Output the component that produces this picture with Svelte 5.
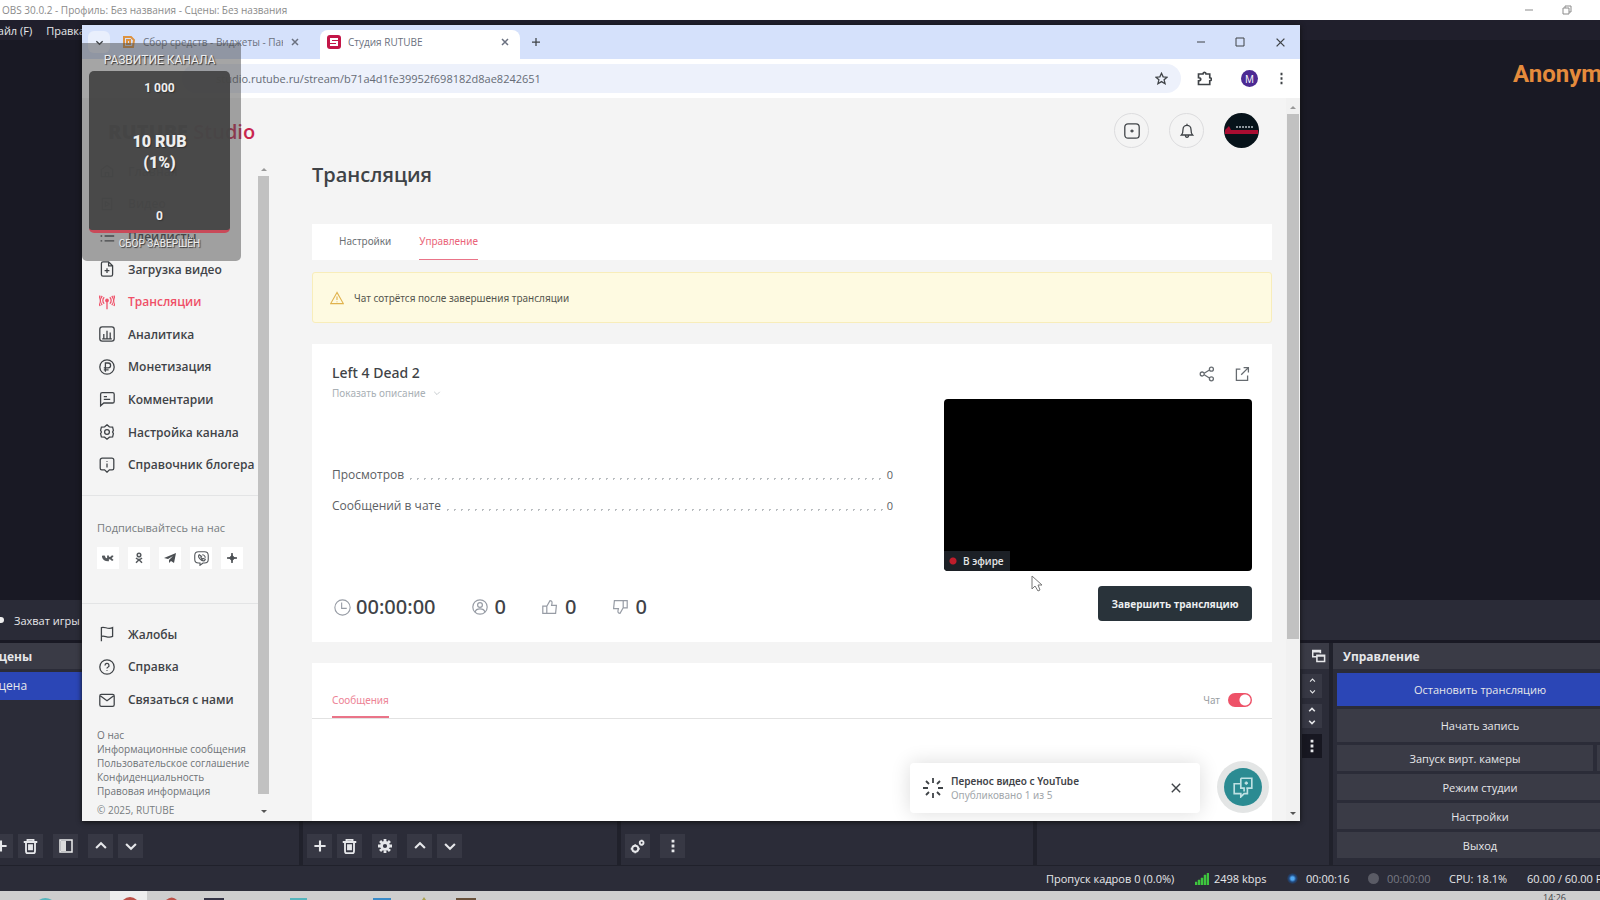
<script lang="ts">
	type Icon = { d: string; dot?: [number, number] };

	const icons: Record<string, Icon> = {
		home: { d: 'M3 8l7-5 7 5v9H3zM8 17v-5h4v5' },
		video: { d: 'M4 3h12v14H4zM8 7l5 3-5 3z' },
		list: { d: 'M2 4h2M2 10h2M2 16h2M7 4h12M7 10h12M7 16h12' },
		upload: { d: 'M12 1H5a2 2 0 0 0-2 2v14a2 2 0 0 0 2 2h10a2 2 0 0 0 2-2V6zM12 1v5h5M10 9v6M7 12h6' },
		live: { d: 'M10 9v10M6.500 4a5.500 5.500 0 0 0 0 8M13.500 4a5.500 5.500 0 0 1 0 8M4 2.500a9 9 0 0 0 0 11.500M16 2.500a9 9 0 0 1 0 11.500M1.500 2a12 12 0 0 0 0 13M18.500 2a12 12 0 0 1 0 13', dot: [10, 8] },
		chart: { d: 'M4 1h12a3 3 0 0 1 3 3v12a3 3 0 0 1-3 3H4a3 3 0 0 1-3-3V4a3 3 0 0 1 3-3zM6 10v6M10 6v10M14 8v8M4 16h12' },
		ruble: { d: 'M19 10a9 9 0 1 1-18 0 9 9 0 0 1 18 0M8 16V5h3.500a3 3 0 0 1 0 6H6M6 13.500h6' },
		comment: { d: 'M2 18.500V4a2 2 0 0 1 2-2h13a2 2 0 0 1 2 2v9a2 2 0 0 1-2 2H6zM6 7h4M6 10.500h8' },
		gear: { d: 'M10 1l3 2.500 4 .5 1 4-1 2 1 2-1 4-4 .5-3 2.500-3-2.500-4-.5-1-4 1-2-1-2 1-4 4-.5zM13 10a3 3 0 1 1-6 0 3 3 0 0 1 6 0' },
		guide: { d: 'M4 1.500h12a2.500 2.500 0 0 1 2.500 2.500v10a2 2 0 0 1-2 2H13l-3 3-3-3H3.500a2 2 0 0 1-2-2V4A2.500 2.500 0 0 1 4 1.500zM10 8v5M10 5v1' },
		flag: { d: 'M3 19V2c4-2 8 3 14 0v11c-6 3-10-2-14 0' },
		help: { d: 'M19 10a9 9 0 1 1-18 0 9 9 0 0 1 18 0M7.500 8a2.500 2.500 0 1 1 3.500 2.300c-1 .4-1 1-1 1.700M10 14v1' },
		mail: { d: 'M3 3h14a2 2 0 0 1 2 2v11a2 2 0 0 1-2 2H3a2 2 0 0 1-2-2V5a2 2 0 0 1 2-2zM2 5l8 6 8-6' },
		share: { d: 'M6.500 10a2.500 2.500 0 1 1-5 0 2.500 2.500 0 0 1 5 0M18 4a2.500 2.500 0 1 1-5 0 2.500 2.500 0 0 1 5 0M18 16a2.500 2.500 0 1 1-5 0 2.500 2.500 0 0 1 5 0M6.500 9l6.500-4M6.500 11l6.500 4' },
		external: { d: 'M8 4H3v14h14v-6M12 2h6v6M18 2L9 11' },
		clock: { d: 'M19 10a9 9 0 1 1-18 0 9 9 0 0 1 18 0M9 4v7h6' },
		person: { d: 'M19 10a9 9 0 1 1-18 0 9 9 0 0 1 18 0M13 7.500a3 3 0 1 1-6 0 3 3 0 0 1 6 0M4 16c1-5 11-5 12 0' },
		like: { d: 'M1 9h5v9H1zM6 9l4-7c3 0 3 2 2 6h6l-1 10H6' },
		dislike: { d: 'M19 11h-5V2h5zM14 11l-4 7c-3 0-3-2-2-6H2L3 2h11' },
		addBox: { d: 'M5 1h10a4 4 0 0 1 4 4v10a4 4 0 0 1-4 4H5a4 4 0 0 1-4-4V5a4 4 0 0 1 4-4zM10 8v4M8 10h4' },
		bell: { d: 'M3 15c2-2 2-4 2-7a5 5 0 0 1 10 0c0 3 0 5 2 7zM8 15c0 4 4 4 4 0M10 1v2' },
		star: { d: 'M10 2l2.500 5.500 6 .5-4.500 4 1.500 6-5.500-3.200L4.500 18 6 12 1.500 8l6-.5z' },
		puzzle: { d: 'M2 4h6c0-3 4-3 4 0h5v5c3 0 3 4 0 4v5H2v-5c4 0 4-4 0-4z' },
		warning: { d: 'M10 2L1 18h18zM10 8v5M10 15v1' },
		plus: { d: 'M10 2v16M2 10h16' },
		up: { d: 'M3 13l7-7 7 7' },
		down: { d: 'M3 7l7 7 7-7' },
		cross: { d: 'M4 4l12 12M16 4L4 16' },
		trash: { d: 'M1 4h18M6 4V1h8v3M4 4v12q0 3 2 3h8q2 0 2-3V4M8 7v8M10 7v8M12 7v8' },
		cog: { d: 'M10 0v4M10 16v4M0 10h4M16 10h4M3 3l3 3M14 14l3 3M3 17l3-3M14 6l3-3M15 10a5 5 0 1 1-10 0 5 5 0 0 1 10 0' },
		cogs: { d: 'M11 13a4 4 0 1 1-8 0 4 4 0 0 1 8 0M18 5a2.500 2.500 0 1 1-5 0 2.500 2.500 0 0 1 5 0M7 7v2M7 17v2M1 13h2M11 13h2M15.500 1v1M15.500 8v1' },
		kebab: { d: 'M10 1v4M10 8v4M10 15v4' },
		popout: { d: 'M12 6V2H1v9h5M1 4h11M7 9h11v9H7zM7 10h11' },
		minimize: { d: 'M2 10h16' },
		maximize: { d: 'M2 2h16v16H2z' },
		restore: { d: 'M2 6h12v12H2zM6 6V2h12v12h-4' },
		spinner: { d: 'M10 0v5M10 15v5M0 10h5M15 10h5M3 3l3 3M14 14l3 3M3 17l3-3M14 6l3-3' },
		chats: { d: 'M8 2h10v9H13M8 2v9h3v3M8 7H2v9h6v3l3-3h3v-5M13 5v3M11.500 6.500h3' },
		vk: { d: 'M1 6c1 6 4 8 9 8V6M3 6c1 4 3 6 6 6M18 6c-2 4-4 4-8 4 4 0 6 1 8 4' },
		ok: { d: 'M13 5a3 3 0 1 1-6 0 3 3 0 0 1 6 0M5 10c3 3 7 3 10 0M10 12v2M10 13l-5 5M10 13l5 5' },
		viber: { d: 'M6 1h8q5 0 5 5v5q0 5-5 5h-2l-4 3v-3H6q-5 0-5-5V6q0-5 5-5zM7 5c-3 3 3 9 7 8l1-2-3-1-1 1-2-3 1-1zM11 5c2 0 4 2 4 4' }
	};

	const nav = [
		['home', 'Главная'],
		['video', 'Видео'],
		['list', 'Плейлисты'],
		['upload', 'Загрузка видео'],
		['live', 'Трансляции'],
		['chart', 'Аналитика'],
		['ruble', 'Монетизация'],
		['comment', 'Комментарии'],
		['gear', 'Настройка канала'],
		['guide', 'Справочник блогера']
	];
	const support = [
		['flag', 'Жалобы'],
		['help', 'Справка'],
		['mail', 'Связаться с нами']
	];
	const legal = [
		'О нас',
		'Информационные сообщения',
		'Пользовательское соглашение',
		'Конфиденциальность',
		'Правовая информация'
	];
	const counters = [
		['Просмотров', '0'],
		['Сообщений в чате', '0']
	];
	const reactions = ['person', 'like', 'dislike'];

	let chatOn = $state(true);
</script>

{#snippet icon(name: string, size: number, weight = 1.6)}
	<svg width={size} height={size} viewBox="0 0 20 20" fill="none" stroke="currentColor" stroke-width={weight} aria-hidden="true">
		<path d={icons[name].d} />
		{#if icons[name].dot}
			<circle cx={icons[name].dot[0]} cy={icons[name].dot[1]} r="1.500" fill="currentColor" />
		{/if}
	</svg>
{/snippet}

<div class="desktop">
	<div class="obs">
		<header class="obs-title">
			<span>OBS 30.0.2 - Профиль: Без названия - Сцены: Без названия</span>
			<div class="obs-window-buttons">
				<button aria-label="Свернуть">{@render icon('minimize', 10, 2)}</button>
				<button aria-label="Развернуть">{@render icon('restore', 10, 2)}</button>
			</div>
		</header>
		<nav class="obs-menu">
			<button>Файл (F)</button>
			<button>Правка</button>
		</nav>
		<div class="canvas"></div>
		<div class="source-bar"><i></i>Захват игры</div>

		<div class="docks">
			<section class="dock scenes">
				<h2>Сцены</h2>
				<div class="scene">Сцена</div>
				<div class="tools">
					<button aria-label="Добавить сцену">{@render icon('plus', 14, 3)}</button>
					<button aria-label="Удалить сцену">{@render icon('trash', 15, 2.5)}</button>
					<button class="gap" aria-label="Фильтры">
						<svg width="14" height="14" viewBox="0 0 14 14"><path d="M1 1h12v12H1z" fill="none" stroke="#eee" stroke-width="1.500" /><path d="M2 2h5v10H2z" fill="#ddd" /></svg>
					</button>
					<button class="gap" aria-label="Вверх">{@render icon('up', 14, 3)}</button>
					<button aria-label="Вниз">{@render icon('down', 14, 3)}</button>
				</div>
			</section>
			<section class="dock sources">
				<div class="tools">
					<button aria-label="Добавить источник">{@render icon('plus', 14, 3)}</button>
					<button aria-label="Удалить источник">{@render icon('trash', 15, 2.5)}</button>
					<button class="gap" aria-label="Свойства">{@render icon('cog', 14, 4)}</button>
					<button class="gap" aria-label="Вверх">{@render icon('up', 14, 3)}</button>
					<button aria-label="Вниз">{@render icon('down', 14, 3)}</button>
				</div>
			</section>
			<section class="dock mixer">
				<div class="tools">
					<button aria-label="Параметры звука">{@render icon('cogs', 15, 2.5)}</button>
					<button class="gap" aria-label="Меню">{@render icon('kebab', 14, 4)}</button>
				</div>
			</section>
			<section class="dock transitions">
				<h2>{@render icon('popout', 14, 2.2)}</h2>
				<div class="steppers">
					<button aria-label="Переход">{@render icon('up', 7, 3)}{@render icon('down', 7, 3)}</button>
					<button aria-label="Длительность">{@render icon('up', 8, 4)}{@render icon('down', 8, 4)}</button>
					<button class="dark" aria-label="Ещё">{@render icon('kebab', 14, 4)}</button>
				</div>
			</section>
			<section class="dock controls">
				<h2>Управление</h2>
				<div class="control-list">
					<button class="tall active">Остановить трансляцию</button>
					<button class="tall">Начать запись</button>
					<div class="split"><button>Запуск вирт. камеры</button><button aria-label="Настройка камеры"></button></div>
					<button>Режим студии</button>
					<button>Настройки</button>
					<button>Выход</button>
				</div>
			</section>
		</div>

		<footer class="status">
			<span class="dropped">Пропуск кадров 0 (0.0%)</span>
			<span class="rate">
				<svg width="14" height="12" viewBox="0 0 14 12" fill="#3fc63f"><path d="M0 9h2v3H0zM3 7h2v5H3zM6 5h2v7H6zM9 2h2v10H9zM12 0h2v12h-2z" stroke="#3fc63f" stroke-width=".5" /></svg>
				2498 kbps
			</span>
			<span class="time"><i class="on"></i>00:00:16</span>
			<span class="time muted"><i></i>00:00:00</span>
			<span class="cpu">CPU: 18.1%</span>
			<span class="fps">60.00 / 60.00 FPS</span>
		</footer>
	</div>

	<div class="taskbar">
		<svg width="500" height="9" aria-hidden="true">
			<path d="M110 0h37v9h-37z" fill="#eee" />
			<path d="M39 9q6-4 13 0zM290 7h17v2h-17z" fill="#55b5bd" />
			<path d="M123 9q7-6 14 0zM166 9q6-5 11 0z" fill="#bd5148" />
			<path d="M204 7h20v2h-20z" fill="#343446" />
			<path d="M373 7h18v2h-18z" fill="#398bc9" />
			<path d="M422 9l2-3 2 3z" fill="#aca24e" />
			<path d="M456 7h20v2h-20z" fill="#68513a" />
		</svg>
		<time>14:26</time>
	</div>

	<div class="donor">Anonymous</div>

	<div class="browser">
		<div class="tabstrip">
			<button class="tab-search" aria-label="Поиск вкладок">{@render icon('down', 9, 3)}</button>
			<div class="tab">
				<svg width="14" height="14" viewBox="0 0 14 14" fill="none" stroke="#dd9240" stroke-width="2"><path d="M2 2h7l3 3-1 7H2zM5 5h3v4H5z" /></svg>
				<span>Сбор средств - Виджеты - Панель</span>
				<button aria-label="Закрыть вкладку">{@render icon('cross', 10, 3)}</button>
			</div>
			<div class="tab current">
				<svg width="14" height="14" viewBox="0 0 14 14"><rect width="14" height="14" rx="3" fill="#c31648" /><path d="M11 4H4v3h6v3H3" fill="none" stroke="#fff" stroke-width="2" /></svg>
				<span>Студия RUTUBE</span>
				<button aria-label="Закрыть вкладку">{@render icon('cross', 10, 3)}</button>
			</div>
			<button class="new-tab" aria-label="Новая вкладка">{@render icon('plus', 10, 2.5)}</button>
			<div class="window-buttons">
				<button aria-label="Свернуть">{@render icon('minimize', 10, 2)}</button>
				<button aria-label="Развернуть">{@render icon('maximize', 10, 2)}</button>
				<button aria-label="Закрыть">{@render icon('cross', 13, 2)}</button>
			</div>
		</div>
		<div class="toolbar">
			<div class="omnibox">
				<input aria-label="Адрес" value="studio.rutube.ru/stream/b71a4d1fe39952f698182d8ae8242651" />
				<button aria-label="В закладки">{@render icon('star', 13, 2)}</button>
			</div>
			<button class="extensions" aria-label="Расширения">{@render icon('puzzle', 15, 2.2)}</button>
			<button class="profile">М</button>
			<button aria-label="Меню">{@render icon('kebab', 13, 3)}</button>
		</div>

		<div class="viewport">
			<div class="page">
				<header class="page-head">
					<a class="logo" href="#studio"><b>RUTUBE</b> Studio</a>
					<button aria-label="Добавить">{@render icon('addBox', 16)}</button>
					<button aria-label="Уведомления">{@render icon('bell', 16)}</button>
					<button class="avatar" aria-label="Профиль">
						<svg width="35" height="35" viewBox="0 0 35 35"><circle cx="17.500" cy="17.500" r="17.500" fill="#07131a" /><path d="M1 17l4-4 2 4h27v4H1z" fill="#a80d31" /><path d="M12 14h18" stroke="#8c969c" stroke-width="2" stroke-dasharray="2 1" /></svg>
					</button>
				</header>
				<div class="page-body">
					<aside>
						<div class="side">
							<nav class="side-nav">
								{#each nav as [name, label]}
									<a href="#{name}" class:active={name === 'live'}>{@render icon(name, 16)}{label}</a>
								{/each}
							</nav>
							<div class="follow">
								<p>Подписывайтесь на нас</p>
								<div class="social">
									<a href="#vk" aria-label="VK">{@render icon('vk', 12, 3)}</a>
									<a href="#ok" aria-label="OK">{@render icon('ok', 12, 2.5)}</a>
									<a href="#telegram" aria-label="Telegram"><svg width="12" height="12" viewBox="0 0 12 12" fill="#4b4f53"><path d="M0 6l12-5-2 10-3-2-2 2V8l4-4-5 3z" /></svg></a>
									<a href="#viber" aria-label="Viber">{@render icon('viber', 15, 1.5)}</a>
									<a href="#zen" aria-label="Дзен"><svg width="10" height="10" viewBox="0 0 10 10" fill="#4b4f53"><path d="M5 0q0 5 5 5-5 0-5 5 0-5-5-5 5 0 5-5z" stroke="#4b4f53" /></svg></a>
								</div>
							</div>
							<nav class="side-nav support">
								{#each support as [name, label]}
									<a href="#{name}">{@render icon(name, 16)}{label}</a>
								{/each}
							</nav>
							<div class="legal">
								{#each legal as label}
									<a href="#legal">{label}</a>
								{/each}
							</div>
							<small>© 2025, RUTUBE</small>
						</div>
						<div class="scroll side-scroll"><i class="arrow-up"></i><i class="thumb"></i><i class="arrow-down"></i></div>
					</aside>

					<main>
						<h1>Трансляция</h1>
						<div class="tabs">
							<a href="#settings">Настройки</a>
							<a href="#manage" class="active">Управление</a>
						</div>
						<div class="alert">{@render icon('warning', 14)}Чат сотрётся после завершения трансляции</div>

						<section class="stream">
							<div class="info">
								<h3>Left 4 Dead 2</h3>
								<button class="more">Показать описание {@render icon('down', 8)}</button>
								<dl>
									{#each counters as [label, value]}
										<div><dt>{label}</dt><i></i><dd>{value}</dd></div>
									{/each}
								</dl>
							</div>
							<div class="player">
								<div class="actions">
									<button aria-label="Поделиться">{@render icon('share', 16)}</button>
									<button aria-label="Открыть">{@render icon('external', 16)}</button>
								</div>
								<div class="video"><span class="on-air">В эфире</span></div>
							</div>
							<div class="stats">
								<span class="duration">{@render icon('clock', 17, 1.3)}00:00:00</span>
								{#each reactions as name}
									<span>{@render icon(name, 16, 1.5)}0</span>
								{/each}
							</div>
							<button class="finish">Завершить трансляцию</button>
						</section>

						<section class="chat">
							<div class="chat-head">
								<a href="#messages">Сообщения</a>
								<label>Чат <input type="checkbox" bind:checked={chatOn} /></label>
							</div>
						</section>
					</main>
				</div>
			</div>
			<div class="scroll page-scroll"><i class="arrow-up"></i><i class="thumb"></i><i class="arrow-down"></i></div>

			<div class="toast">
				{@render icon('spinner', 20, 1.8)}
				<div><b>Перенос видео с YouTube</b><span>Опубликовано 1 из 5</span></div>
				<button aria-label="Закрыть">{@render icon('cross', 14, 2)}</button>
			</div>
			<button class="helper" aria-label="Чат поддержки">{@render icon('chats', 22, 1.5)}</button>
		</div>
	</div>

	<div class="goal">
		<div>РАЗВИТИЕ КАНАЛА</div>
		<div class="goal-box">
			<span>1 000</span>
			<strong>10 RUB<br />(1%)</strong>
			<span>0</span>
		</div>
		<div class="goal-note">СБОР ЗАВЕРШЁН</div>
	</div>

	<svg class="cursor" width="12" height="18" viewBox="0 0 12 18" aria-hidden="true"><path d="M1 1v13l3-3 3 5 2-1-2-5h4z" fill="#fff" stroke="#777" /></svg>
</div>

<style>
	:global(body) {
		margin: 0;
		overflow: hidden;
		background: #191924;
	}

	.desktop {
		position: relative;
		display: flex;
		flex-direction: column;
		height: 100vh;
		overflow: hidden;
		font-family: 'Open Sans', 'Noto Sans', sans-serif;
		font-size: 12px;
		color: #3f4347;
	}

	.desktop * {
		box-sizing: border-box;
	}

	svg {
		display: block;
		flex: none;
	}

	button {
		display: flex;
		align-items: center;
		justify-content: center;
		padding: 0;
		border: 0;
		background: none;
		font: inherit;
		color: inherit;
	}

	a {
		color: inherit;
		text-decoration: none;
	}

	h1,
	h2,
	h3,
	p,
	dl,
	dd {
		margin: 0;
	}

	/* OBS window, slightly wider than the screen on both sides */
	.obs {
		display: flex;
		flex: 1;
		flex-direction: column;
		min-height: 0;
		margin: 0 -24px 0 -11px;
		font-size: 11px;
		color: #e6e7ea;
	}

	.obs-title {
		display: flex;
		align-items: center;
		justify-content: space-between;
		height: 20px;
		padding: 0 52px 0 13px;
		background: #fff;
		font-size: 10px;
		color: #8b8b8b;
	}

	.obs-window-buttons {
		display: flex;
		gap: 28px;
	}

	.obs-menu {
		display: flex;
		gap: 14px;
		height: 20px;
		background: #201f2c;
	}

	.canvas {
		flex: 1;
		background: #191924;
	}

	.source-bar {
		display: flex;
		align-items: center;
		gap: 10px;
		height: 40px;
		padding-left: 9px;
		margin-bottom: 3px;
		background: #2a2b37;
	}

	.source-bar i {
		width: 6px;
		height: 6px;
		border-radius: 3px;
		background: #eee;
	}

	.docks {
		display: flex;
		gap: 4px;
		height: 222px;
		background: #20212b;
	}

	.dock {
		display: flex;
		flex-direction: column;
		background: #2b2c38;
	}

	.dock h2 {
		display: flex;
		align-items: center;
		height: 26px;
		padding: 0 3px 0 10px;
		background: #3a3b46;
		font-size: 12px;
		font-weight: 700;
	}

	.scenes {
		width: 310px;
	}

	.dock.scenes h2 {
		padding-left: 2px;
	}

	.sources {
		width: 314px;
	}

	.mixer {
		flex: 1;
	}

	.transitions {
		width: 292px;
	}

	.dock.transitions h2 {
		justify-content: flex-end;
	}

	.controls {
		width: 291px;
	}

	.scene {
		height: 28px;
		margin-top: 3px;
		padding-left: 2px;
		background: #2b46b6;
		font-size: 12px;
		line-height: 28px;
	}

	.tools {
		display: flex;
		gap: 5px;
		margin-top: auto;
		padding: 0 0 7px 4px;
	}

	.scenes .tools {
		margin-left: -5px;
	}

	.tools button {
		width: 25px;
		height: 24px;
		background: #373844;
	}

	.tools .gap {
		margin-left: 5px;
	}

	.steppers {
		display: flex;
		flex-direction: column;
		align-items: flex-end;
		gap: 6px;
		padding: 5px 7px;
	}

	.steppers button {
		flex-direction: column;
		gap: 4px;
		width: 20px;
		height: 24px;
		background: #373844;
	}

	.steppers .dark {
		background: #171721;
	}

	.control-list {
		display: flex;
		flex-direction: column;
		gap: 3px;
		padding: 4px 1px 0 4px;
	}

	.control-list button {
		height: 26px;
		background: #3a3b46;
	}

	.control-list .tall {
		height: 33px;
	}

	.control-list .active {
		background: #2b46b6;
	}

	.split {
		display: flex;
		gap: 4px;
	}

	.split button:first-child {
		flex: 1;
	}

	.split button:last-child {
		width: 26px;
	}

	.status {
		display: flex;
		align-items: center;
		justify-content: flex-end;
		height: 26px;
		border-top: 1px solid #20212b;
		background: #2b2c38;
		font-size: 11px;
	}

	.status span {
		display: flex;
		align-items: center;
		gap: 5px;
		white-space: nowrap;
	}

	.dropped {
		width: 149px;
	}

	.rate {
		width: 92px;
	}

	.time {
		width: 81px;
	}

	.status .time {
		gap: 8px;
	}

	.time i {
		width: 11px;
		height: 11px;
		border-radius: 50%;
		background: #5a5b65;
	}

	.time .on {
		background: radial-gradient(#52a9f2 20%, #214a80 45%, transparent 75%);
	}

	.muted {
		color: #777983;
	}

	.cpu {
		width: 78px;
	}

	.fps {
		width: 97px;
	}

	.taskbar {
		display: flex;
		justify-content: space-between;
		height: 9px;
		padding-right: 34px;
		overflow: hidden;
		background: #cecece;
		font-size: 9px;
	}

	.donor {
		position: absolute;
		top: 56px;
		left: calc(100% - 87px);
		font-family: Roboto, sans-serif;
		font-size: 24px;
		line-height: 36px;
		font-weight: 700;
		color: #e58b3c;
	}

	/* Browser window */
	.browser {
		position: absolute;
		top: 25px;
		right: 300px;
		bottom: 79px;
		left: 82px;
		display: flex;
		flex-direction: column;
		overflow: hidden;
		background: #fff;
		box-shadow: 0 1px 5px #111;
	}

	.tabstrip {
		display: flex;
		align-items: center;
		height: 34px;
		background: #d5e1fb;
		font-size: 10px;
	}

	.tab-search {
		width: 22px;
		height: 22px;
		margin-left: 6px;
		border-radius: 6px;
		background: #e9effc;
	}

	.tab {
		display: flex;
		align-items: center;
		gap: 7px;
		width: 200px;
		height: 29px;
		margin-top: 5px;
		padding: 0 10px 5px 12px;
		color: #6b7180;
	}

	.tab span {
		flex: 1;
		overflow: hidden;
		white-space: nowrap;
	}

	.tab.current {
		margin-left: 10px;
		padding-left: 7px;
		border-radius: 8px 8px 0 0;
		background: #fff;
	}

	.new-tab {
		margin-left: 11px;
	}

	.window-buttons {
		display: flex;
		align-items: center;
		gap: 29px;
		margin-left: auto;
		padding-right: 13px;
	}

	.toolbar {
		display: flex;
		align-items: center;
		height: 39px;
		padding-right: 12px;
	}

	.omnibox {
		display: flex;
		flex: 1;
		align-items: center;
		height: 29px;
		margin-left: 100px;
		padding: 0 13px 0 34px;
		border-radius: 15px;
		background: #edf1fb;
	}

	.omnibox input {
		flex: 1;
		padding: 0;
		border: 0;
		background: none;
		font: inherit;
		font-size: 11px;
		color: #666c76;
	}

	.extensions {
		margin: 0 29px 0 16px;
	}

	.profile {
		width: 17px;
		height: 17px;
		margin-right: 17px;
		border-radius: 50%;
		background: #4c2a93;
		font-size: 10px;
		color: #fff;
	}

	.viewport {
		position: relative;
		display: flex;
		flex: 1;
		min-height: 0;
		background: #f4f4f4;
	}

	.page {
		display: flex;
		flex: 1;
		flex-direction: column;
		min-width: 0;
	}

	.page-head {
		display: flex;
		gap: 20px;
		height: 57px;
		padding: 15px 27px 0 26px;
	}

	.page-head button {
		width: 35px;
		height: 35px;
		border: 1px solid #dcdcde;
		border-radius: 50%;
	}

	.page-head .avatar {
		border: 0;
	}

	.logo {
		margin-right: auto;
		font-size: 20px;
		line-height: 38px;
		font-weight: 600;
		color: #c9264f;
	}

	.logo b {
		font-weight: 800;
		color: #151b24;
	}

	.page-body {
		display: flex;
		flex: 1;
		min-height: 0;
	}

	aside {
		display: flex;
		width: 187px;
	}

	.side {
		flex: 1;
		min-width: 0;
		white-space: nowrap;
	}

	.side-nav {
		display: grid;
		grid-auto-rows: 1fr;
		height: 326px;
		padding-left: 17px;
		font-size: 12px;
		font-weight: 600;
	}

	.side-nav a {
		display: flex;
		align-items: center;
		gap: 13px;
	}

	.side-nav .active {
		color: #ef5068;
	}

	.follow {
		height: 109px;
		margin-top: 14px;
		padding: 23px 0 0 15px;
		border: 1px solid #e3e4e5;
		border-width: 1px 0;
		font-size: 11px;
		line-height: 18px;
		color: #777c80;
	}

	.social {
		display: flex;
		gap: 9px;
		margin-top: 10px;
	}

	.social a {
		display: flex;
		align-items: center;
		justify-content: center;
		width: 22px;
		height: 22px;
		background: #fff;
		color: #55595d;
	}

	.support {
		height: 98px;
		margin-top: 14px;
	}

	.legal {
		display: flex;
		flex-direction: column;
		margin: 12px 0 5px 15px;
		font-size: 10px;
		line-height: 14px;
		color: #6d7276;
	}

	small {
		display: block;
		margin-left: 15px;
		font-size: 10px;
		line-height: 14px;
		color: #777c80;
	}

	.scroll {
		display: flex;
		flex: none;
		flex-direction: column;
		align-items: center;
	}

	.scroll .thumb {
		width: 100%;
		background: #c1c1c1;
	}

	.arrow-up,
	.arrow-down {
		border: 3px solid transparent;
	}

	.arrow-up {
		border-bottom-color: #999;
		border-top: 0;
	}

	.arrow-down {
		margin-top: auto;
		border-top-color: #555;
		border-bottom: 0;
	}

	.side-scroll {
		width: 11px;
		padding: 13px 0 8px;
	}

	.side-scroll .thumb {
		flex: 1;
		margin: 5px 0 16px;
	}

	.page-scroll {
		width: 14px;
		padding: 8px 1px 6px;
		background: #f1f1f1;
	}

	.page-scroll .thumb {
		height: 74%;
		margin-top: 5px;
	}

	main {
		display: flex;
		flex: 1;
		flex-direction: column;
		min-width: 0;
		padding: 7px 14px 0 43px;
	}

	h1 {
		margin-bottom: 36px;
		font-size: 20px;
		line-height: 26px;
		font-weight: 600;
	}

	.tabs {
		display: flex;
		gap: 28px;
		height: 36px;
		padding: 0 27px;
		background: #fff;
		font-family: 'Noto Sans', sans-serif;
		font-size: 10px;
		line-height: 35px;
		color: #6c7074;
	}

	.tabs .active {
		border-bottom: 1px solid #ea7488;
		color: #ea6479;
	}

	.alert {
		display: flex;
		align-items: center;
		gap: 10px;
		height: 51px;
		margin: 12px 0 21px;
		padding-left: 17px;
		border: 1px solid #f8edba;
		border-radius: 3px;
		background: #fefae1;
		font-family: 'Noto Sans', sans-serif;
		font-size: 10px;
		color: #55564e;
	}

	.alert :global(svg) {
		color: #e0b24d;
	}

	.stream {
		display: grid;
		grid-template-columns: 1fr 308px;
		gap: 15px 51px;
		padding: 20px 20px 21px;
		background: #fff;
	}

	h3 {
		font-family: 'Noto Sans', sans-serif;
		font-size: 14px;
		line-height: 18px;
		font-weight: 500;
	}

	.more {
		gap: 7px;
		margin-top: 2px;
		font-family: 'Noto Sans', sans-serif;
		font-size: 10px;
		line-height: 18px;
		color: #a9b0b5;
	}

	dl {
		display: grid;
		gap: 11px;
		margin-top: 63px;
		color: #5c6063;
	}

	dl div {
		display: flex;
		gap: 3px;
		line-height: 20px;
	}

	dl i {
		flex: 1;
		background: radial-gradient(circle, #b9bdc0 1px, transparent 1px) 0 12px / 7px 3px repeat-x;
	}

	dd {
		font-size: 11px;
	}

	.actions {
		display: flex;
		justify-content: flex-end;
		gap: 19px;
		height: 35px;
		padding-right: 2px;
		color: #666b70;
	}

	.actions button {
		height: 20px;
	}

	.video {
		display: flex;
		align-items: flex-end;
		height: 172px;
		overflow: hidden;
		border-radius: 4px;
		background: #000;
	}

	.on-air {
		padding: 0 6px 0 19px;
		background: radial-gradient(circle at 9px 10px, #bf1d2b 3px, transparent 4px) #1c2026;
		font-size: 10px;
		line-height: 20px;
		font-weight: 600;
		color: #e6e6e6;
	}

	.stats {
		display: flex;
		align-items: center;
		gap: 36px;
		padding-top: 7px;
		font-family: 'Noto Sans', sans-serif;
		font-size: 20px;
		line-height: 28px;
		font-weight: 500;
	}

	.stats span {
		display: flex;
		align-items: center;
		gap: 7px;
	}

	.stats .duration {
		gap: 5px;
		padding-left: 2px;
	}

	.stats :global(svg) {
		color: #979ca5;
	}

	.finish {
		justify-self: end;
		width: 154px;
		height: 35px;
		border-radius: 4px;
		background: #29333a;
		font-size: 10px;
		font-weight: 700;
		color: #eceff1;
	}

	.chat {
		flex: 1;
		margin-top: 21px;
		background: #fff;
	}

	.chat-head {
		display: flex;
		justify-content: space-between;
		height: 56px;
		padding: 19px 20px 0;
		border-bottom: 1px solid #e2e2e2;
		font-family: 'Noto Sans', sans-serif;
		font-size: 10px;
		line-height: 36px;
	}

	.chat-head a {
		border-bottom: 2px solid #ea7488;
		color: #ed8496;
	}

	.chat-head label {
		display: flex;
		align-items: center;
		gap: 8px;
		color: #999ea2;
	}

	.chat-head input {
		appearance: none;
		width: 24px;
		height: 14px;
		margin: 0;
		border-radius: 7px;
		background: radial-gradient(circle at 7px 7px, #fff 5px, transparent 6px) #bbb;
	}

	.chat-head input:checked {
		background: radial-gradient(circle at 17px 7px, #fff 5px, transparent 6px) #ee5268;
	}

	.toast {
		position: absolute;
		right: 100px;
		bottom: 8px;
		display: flex;
		align-items: center;
		gap: 8px;
		width: 290px;
		height: 50px;
		padding: 0 17px 0 13px;
		border-radius: 4px;
		background: #fff;
		box-shadow: 0 0 20px rgb(0 0 0 / 14%);
		font-family: 'Noto Sans', sans-serif;
		font-size: 10px;
		line-height: 14px;
	}

	.toast div {
		display: flex;
		flex: 1;
		flex-direction: column;
	}

	.toast b {
		font-weight: 600;
	}

	.toast span {
		color: #a2a7ab;
	}

	.helper {
		position: absolute;
		right: 38px;
		bottom: 15px;
		width: 38px;
		height: 38px;
		border-radius: 50%;
		background: #2b8b92;
		box-shadow: 0 0 0 7px #e3e5e5;
		color: #bfe1e3;
	}

	/* Donation goal over the scene */
	.goal {
		position: absolute;
		top: 43px;
		left: 82px;
		width: 159px;
		padding: 6px 11px 6px 7px;
		border-radius: 0 0 5px 5px;
		background: rgb(75 75 75 / 50%);
		font-family: Roboto, sans-serif;
		font-size: 12px;
		line-height: 22px;
		text-align: center;
		color: #eee;
		text-shadow: 1px 1px 1px #333;
	}

	.goal-box {
		display: flex;
		flex-direction: column;
		justify-content: space-between;
		height: 162px;
		padding: 6px 0 3px;
		border-bottom: 3px solid #c94a59;
		border-radius: 5px;
		background: rgb(70 70 70 / 96%);
		font-weight: 700;
	}

	.goal strong {
		font-size: 16px;
		line-height: 21px;
	}

	.goal-note {
		font-size: 10px;
	}

	.cursor {
		position: absolute;
		top: 575px;
		left: 1031px;
	}
</style>
